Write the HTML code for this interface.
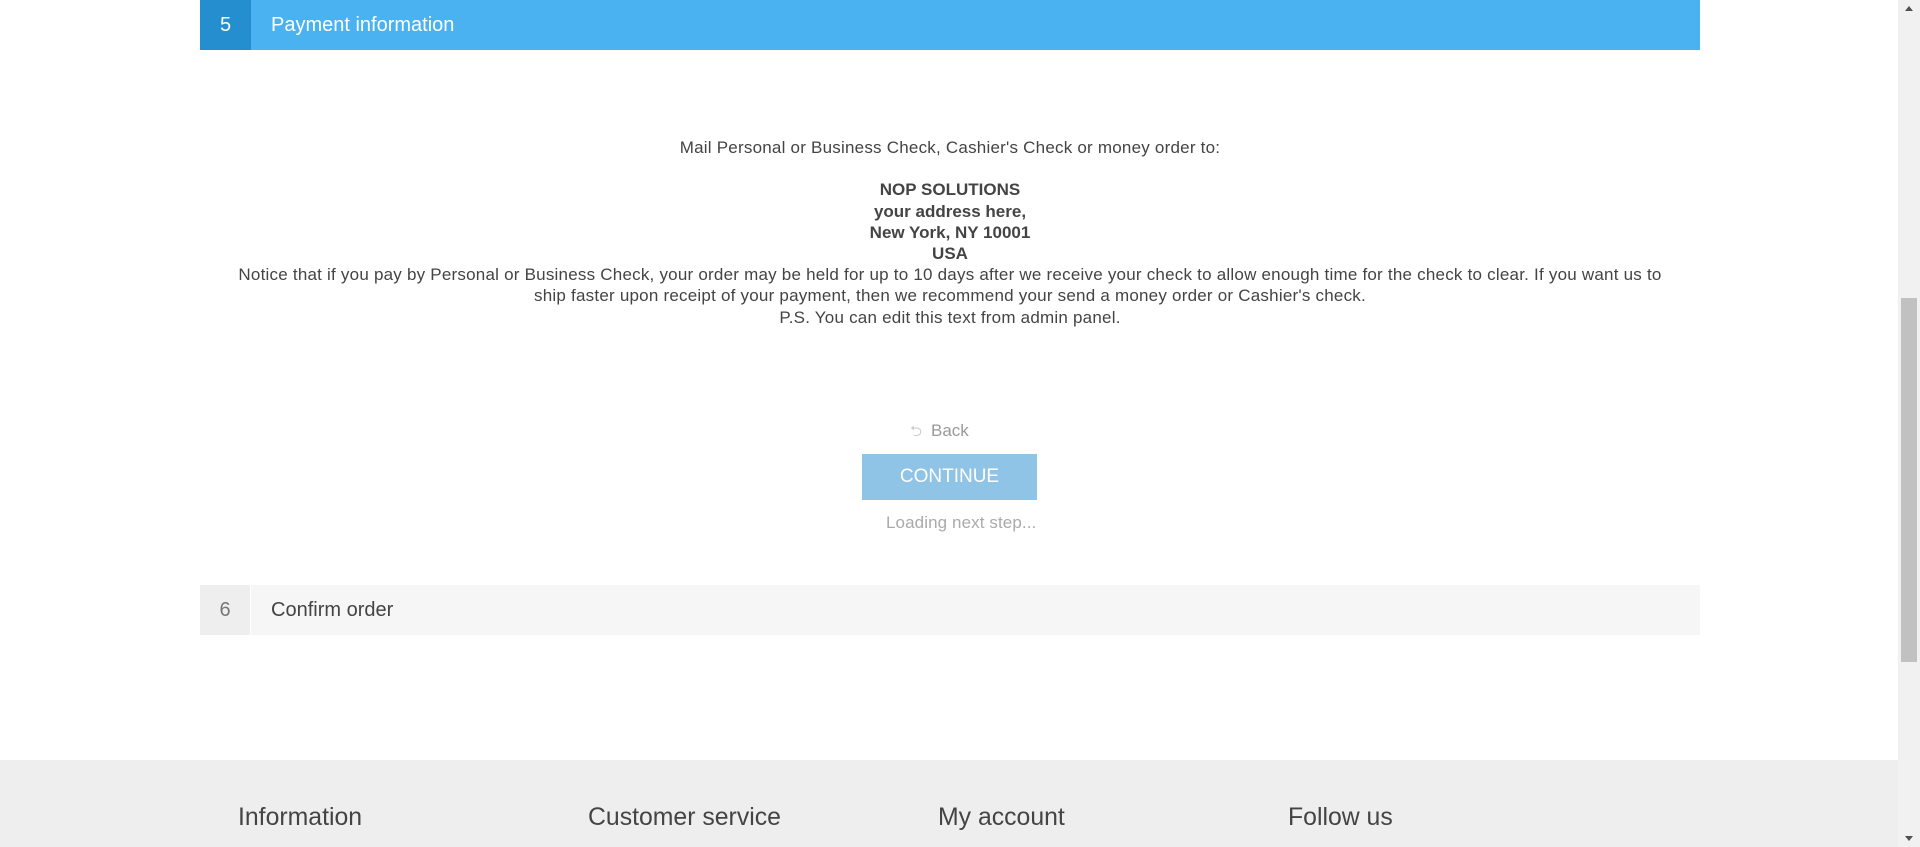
<!DOCTYPE html>
<html><head><meta charset="utf-8"><style>
*{margin:0;padding:0;box-sizing:border-box}
html,body{width:1920px;height:847px;overflow:hidden;background:#fff;font-family:"Liberation Sans",Arial,sans-serif;color:#444}
.sb{position:absolute;left:1898px;top:0;width:22px;height:847px;background:#f1f1f1}
.sb .th{position:absolute;left:3px;top:298px;width:16px;height:364px;background:#c1c1c1}
.sb .up{position:absolute;left:7px;top:6px;width:0;height:0;border-left:4px solid transparent;border-right:4px solid transparent;border-bottom:5px solid #505050}
.sb .dn{position:absolute;left:7px;top:836px;width:0;height:0;border-left:4px solid transparent;border-right:4px solid transparent;border-top:5px solid #505050}
.bar{position:absolute;left:200px;width:1500px;height:50px;font-size:20px;line-height:50px}
.bar .n{position:absolute;left:0;top:0;width:51px;height:50px;text-align:center}
.bar .t{position:absolute;left:71px;top:0}
.b5{top:0;background:#4ab2f1;color:#fff}
.b5 .n{background:#248ece}
.b6{top:585px;background:#f6f6f6;color:#444}
.b6 .n{background:#eee;color:#777;border-right:1px solid #fff}
.info{position:absolute;left:200px;top:137px;width:1500px;text-align:center;font-size:17px;line-height:21.2px;letter-spacing:0.22px}
.info b{letter-spacing:0}
.back{position:absolute;left:910px;top:420px;font-size:17px;color:#999;line-height:22px}
.back span{color:#ccc;margin-right:9px;font-size:15px}
.btn{position:absolute;left:862px;top:454px;width:175px;height:46px;background:#8fc4e6;color:#fff;font-size:19px;text-align:center;line-height:46px}
.load{position:absolute;left:886px;top:512px;font-size:17px;color:#aaa;line-height:22px;letter-spacing:0.1px}
.foot{position:absolute;left:0;top:760px;width:1898px;height:87px;background:#eee}
.foot h3{position:absolute;top:44px;font-weight:normal;font-size:24.8px;color:#444;line-height:28px}
</style></head><body>
<div class="bar b5"><div class="n">5</div><div class="t">Payment information</div></div>
<div class="info">Mail Personal or Business Check, Cashier's Check or money order to:<br><br><b>NOP SOLUTIONS<br>your address here,<br>New York, NY 10001<br>USA</b><br>Notice that if you pay by Personal or Business Check, your order may be held for up to 10 days after we receive your check to allow enough time for the check to clear. If you want us to<br>ship faster upon receipt of your payment, then we recommend your send a money order or Cashier's check.<br>P.S. You can edit this text from admin panel.</div>
<div class="back"><span>⮌</span>Back</div>
<div class="btn">CONTINUE</div>
<div class="load">Loading next step...</div>
<div class="bar b6"><div class="n">6</div><div class="t">Confirm order</div></div>
<div class="foot">
<h3 style="left:238px">Information</h3>
<h3 style="left:588px">Customer service</h3>
<h3 style="left:938px">My account</h3>
<h3 style="left:1288px">Follow us</h3>
</div>
<div class="sb"><div class="up"></div><div class="th"></div><div class="dn"></div></div>
</body></html>
